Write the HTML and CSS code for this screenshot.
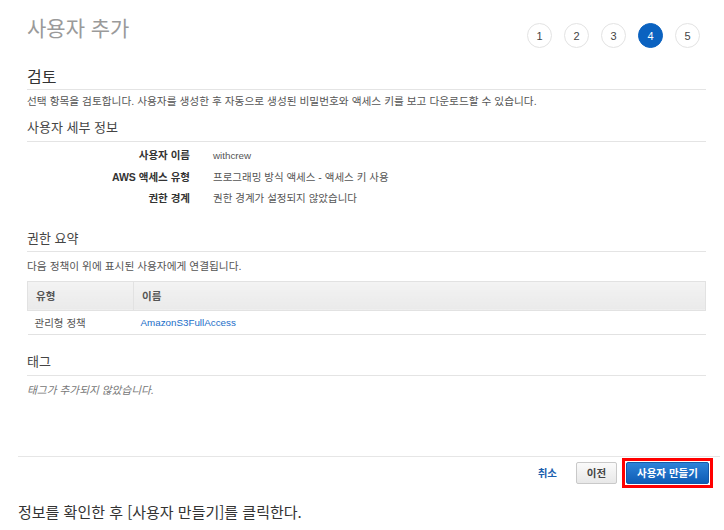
FILE: index.html
```html
<!DOCTYPE html>
<html lang="ko">

<head>
    <meta charset="UTF-8">
    <meta name="viewport" content="width=device-width, initial-scale=1.0">
    <title>사용자 추가</title>
    <link rel="stylesheet" href="styles.css">
</head>

<body>
    <div class="page">

        <div class="console">
            <div class="head">
                <h1 class="title">사용자 추가</h1>
                <div class="steps">
                    <span class="step">1</span>
                    <span class="step">2</span>
                    <span class="step">3</span>
                    <span class="step active">4</span>
                    <span class="step">5</span>
                </div>
            </div>

            <h2 class="review">검토</h2>
            <p class="desc">선택 항목을 검토합니다. 사용자를 생성한 후 자동으로 생성된 비밀번호와 액세스 키를 보고 다운로드할 수 있습니다.</p>

            <h3 class="section first">사용자 세부 정보</h3>
            <div class="details">
                <span class="label">사용자 이름</span>
                <span class="value latin">withcrew</span>
                <span class="label">AWS 액세스 유형</span>
                <span class="value">프로그래밍 방식 액세스 - 액세스 키 사용</span>
                <span class="label">권한 경계</span>
                <span class="value">권한 경계가 설정되지 않았습니다</span>
            </div>

            <h3 class="section perms">권한 요약</h3>
            <p class="desc policy">다음 정책이 위에 표시된 사용자에게 연결됩니다.</p>
            <table class="grid">
                <thead>
                    <tr>
                        <th class="colType">유형</th>
                        <th>이름</th>
                    </tr>
                </thead>
                <tbody>
                    <tr>
                        <td>관리형 정책</td>
                        <td><a href="#" class="link latin">AmazonS3FullAccess</a></td>
                    </tr>
                </tbody>
            </table>

            <h3 class="section tags">태그</h3>
            <p class="desc empty">태그가 추가되지 않았습니다.</p>
        </div>

        <div class="footer">
            <a href="#" class="cancel">취소</a>
            <button class="btn prev">이전</button>
            <div class="mark">
                <button class="btn primary">사용자 만들기</button>
            </div>
        </div>

        <p class="caption">정보를 확인한 후 [사용자 만들기]를 클릭한다.</p>
    </div>
</body>

</html>
```

FILE: styles.css
```css
body {
    margin: 0;
    padding: 0;
    background: #fff;
    font-family: "Liberation Sans", "Noto Sans CJK KR", sans-serif;
    color: #333;
}

.page {
    padding: 0 4px 0 18px;
}

.console {
    padding: 0 14px 0 9px;
}

/* naglowek */
.head {
    display: flex;
    justify-content: space-between;
    align-items: flex-start;
    padding-top: 16px;
}

.title {
    margin: 0;
    font-size: 21px;
    line-height: 26px;
    font-weight: normal;
    color: #9a9a9a;
}

.steps {
    display: flex;
    gap: 12px;
    margin-top: 7px;
    padding-right: 6px;
}

.step {
    width: 23px;
    height: 23px;
    border: 1px solid #e3e3e3;
    border-radius: 50%;
    display: flex;
    align-items: center;
    justify-content: center;
    font-size: 11px;
    color: #444;
    background: #fff;
}

.step.active {
    background: #0b62c0;
    border-color: #0b62c0;
    color: #fff;
}

/* sekcje */
.review {
    margin: 20px 0 0;
    font-size: 16px;
    line-height: 20px;
    font-weight: normal;
    color: #333;
    padding-bottom: 1px;
    border-bottom: 1px solid #e4e4e4;
}

.desc {
    margin: 3px 0 0;
    font-size: 10.7px;
    line-height: 16px;
    color: #555;
}

.section {
    margin: 10px 0 0;
    font-size: 13px;
    line-height: 18px;
    font-weight: normal;
    color: #444;
    padding-bottom: 4px;
    border-bottom: 1px solid #e4e4e4;
}

.section.perms {
    margin-top: 20px;
    padding-bottom: 3px;
}

.section.tags {
    margin-top: 18px;
}

.details {
    display: grid;
    grid-template-columns: 163px 1fr;
    column-gap: 23px;
    margin-top: 3px;
    font-size: 10.5px;
    line-height: 21.5px;
}

.label {
    text-align: right;
    font-weight: bold;
    color: #333;
}

.value {
    color: #555;
}

.latin {
    font-size: 9.8px;
}

.desc.policy {
    margin-top: 6px;
}

.grid {
    width: 100%;
    margin-top: 7px;
    border-collapse: collapse;
    font-size: 10.5px;
}

.grid th {
    height: 28px;
    padding: 0 8px;
    text-align: left;
    font-weight: bold;
    color: #555;
    background: linear-gradient(#f3f3f3, #eaeaea);
    border: 1px solid #e2e2e2;
}

.grid th.colType {
    width: 89px;
}

.grid td {
    height: 23px;
    padding: 0 7px 0 7px;
    color: #555;
    border-bottom: 1px solid #e2e2e2;
}

.link {
    color: #1a6ec8;
    text-decoration: none;
}

.desc.empty {
    margin-top: 6px;
    font-style: italic;
    color: #777;
}

/* przyciski */
.footer {
    display: flex;
    justify-content: flex-end;
    align-items: center;
    margin-top: 58px;
    padding: 1px 7px 0 0;
    border-top: 1px solid #e6e6e6;
}

.cancel {
    font-size: 10.5px;
    font-weight: bold;
    color: #1b5fae;
    text-decoration: none;
    margin-right: 19px;
}

.btn {
    height: 22px;
    margin: 0;
    padding: 0 10px;
    font-family: inherit;
    font-size: 10.5px;
    font-weight: bold;
    border-radius: 2px;
    cursor: pointer;
}

.prev {
    width: 41px;
    padding: 0;
    color: #444;
    background: linear-gradient(#fafafa, #e8e8e8);
    border: 1px solid #c9c9c9;
    margin-right: 5px;
}

.mark {
    border: 3px solid #ff0000;
    padding: 1px;
    display: flex;
}

.primary {
    width: 83px;
    padding: 0;
    color: #fff;
    background: linear-gradient(#2d82d8, #0f5db5);
    border: 1px solid #1458a8;
}

.caption {
    margin: 13px 0 0;
    font-family: "Noto Sans CJK KR", sans-serif;
    font-size: 15px;
    line-height: 22px;
    color: #333;
}
```
